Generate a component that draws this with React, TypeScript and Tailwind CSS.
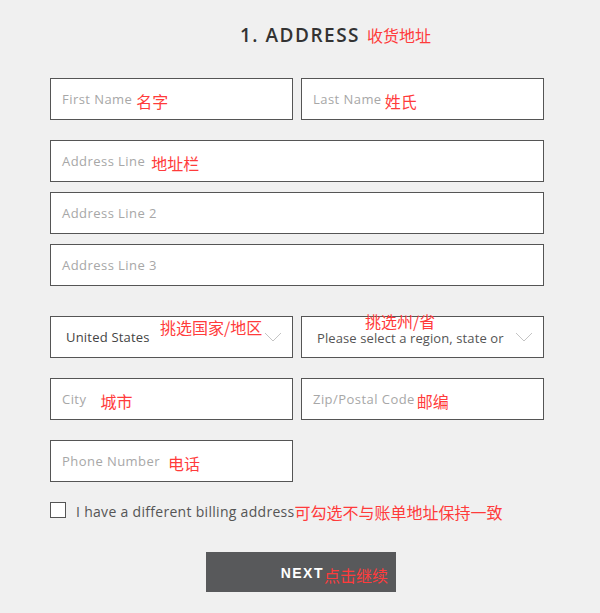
import React from "react";

const red = "text-[#ff3b3b]";
const cjk = "font-['Noto_Sans_CJK_SC',sans-serif]";

const Field = ({
  label,
  note,
  gap = "ml-1",
  className = "",
}: {
  label: string;
  note?: string;
  gap?: string;
  className?: string;
}) => (
  <div
    className={`flex h-[42px] items-center border border-[#555] bg-white pl-[11px] ${className}`}
  >
    <span className="mt-[2px] text-[13px] tracking-[0.45px] text-[#a7a7a7]">{label}</span>
    {note && (
      <span className={`${gap} mt-[4px] ${cjk} text-[16px] leading-none ${red}`}>
        {note}
      </span>
    )}
  </div>
);

const Chevron = () => (
  <svg width="18" height="10" viewBox="0 0 18 10" fill="none">
    <path d="M1 1L9 9L17 1" stroke="#c4c4c4" strokeWidth="1" />
  </svg>
);

export default function App() {
  return (
    <div className="min-h-[613px] w-[600px] bg-[#f0f0f0] font-['Open_Sans',sans-serif]">
      <div className="ml-[50px] w-[494px] pt-[20px]">
        <div className="flex h-[28px] items-end pl-[190px]">
          <span className="text-[19px] font-semibold leading-[26px] tracking-[1.5px] text-[#333]">
            1. ADDRESS
          </span>
          <span className={`ml-[7px] mb-[2px] ${cjk} text-[16px] leading-[22px] ${red}`}>
            收货地址
          </span>
        </div>

        <div className="mt-[30px] grid grid-cols-2 gap-[8px]">
          <Field label="First Name" note="名字" />
          <Field label="Last Name" note="姓氏" gap="ml-[3px]" />
        </div>

        <Field className="mt-[20px]" label="Address Line" note="地址栏" gap="ml-[6px]" />
        <Field className="mt-[10px]" label="Address Line 2" />
        <Field className="mt-[10px]" label="Address Line 3" />

        <div className="mt-[30px] grid grid-cols-2 gap-[8px]">
          <div className="relative flex h-[42px] items-center justify-between border border-[#555] bg-white pl-[15px] pr-[10px]">
            <span className="mt-[2px] text-[13px] tracking-[0.2px] text-[#444]">United States</span>
            <Chevron />
            <span className={`absolute left-[109px] top-[2px] ${cjk} text-[16px] leading-none ${red}`}>
              挑选国家/地区
            </span>
          </div>
          <div className="relative flex h-[42px] items-center justify-between border border-[#555] bg-white pl-[15px] pr-[10px]">
            <span className="mt-[3px] text-[13px] tracking-[0.1px] text-[#555]">
              Please select a region, state or
            </span>
            <Chevron />
            <span className={`absolute left-[63px] top-[-4px] ${cjk} text-[16px] leading-none ${red}`}>
              挑选州/省
            </span>
          </div>
        </div>

        <div className="mt-[20px] grid grid-cols-2 gap-[8px]">
          <Field label="City" note="城市" gap="ml-[14px]" />
          <Field label="Zip/Postal Code" note="邮编" gap="ml-[2px]" />
        </div>

        <div className="mt-[20px] grid grid-cols-2 gap-[8px]">
          <Field label="Phone Number" note="电话" gap="ml-[8px]" />
        </div>

        <div className="mt-[20px] flex h-[16px] items-center">
          <span className="h-[16px] w-[16px] shrink-0 border border-[#555] bg-white" />
          <span className="ml-[10px] mt-[3px] text-[14px] leading-none tracking-[0.3px] text-[#555]">
            I have a different billing address
          </span>
          <span className={`mt-[4px] ${cjk} text-[16px] leading-none ${red}`}>
            可勾选不与账单地址保持一致
          </span>
        </div>

        <div className="mt-[34px] flex pl-[156px]">
          <button className="flex h-[40px] w-[190px] items-center justify-end bg-[#58595b] pr-[8px]">
            <span className="mt-[2px] font-['Liberation_Sans',sans-serif] text-[14px] font-bold tracking-[1.5px] text-white">
              NEXT
            </span>
            <span className={`mt-[5px] ${cjk} text-[16px] leading-none ${red}`}>点击继续</span>
          </button>
        </div>
      </div>
    </div>
  );
}
